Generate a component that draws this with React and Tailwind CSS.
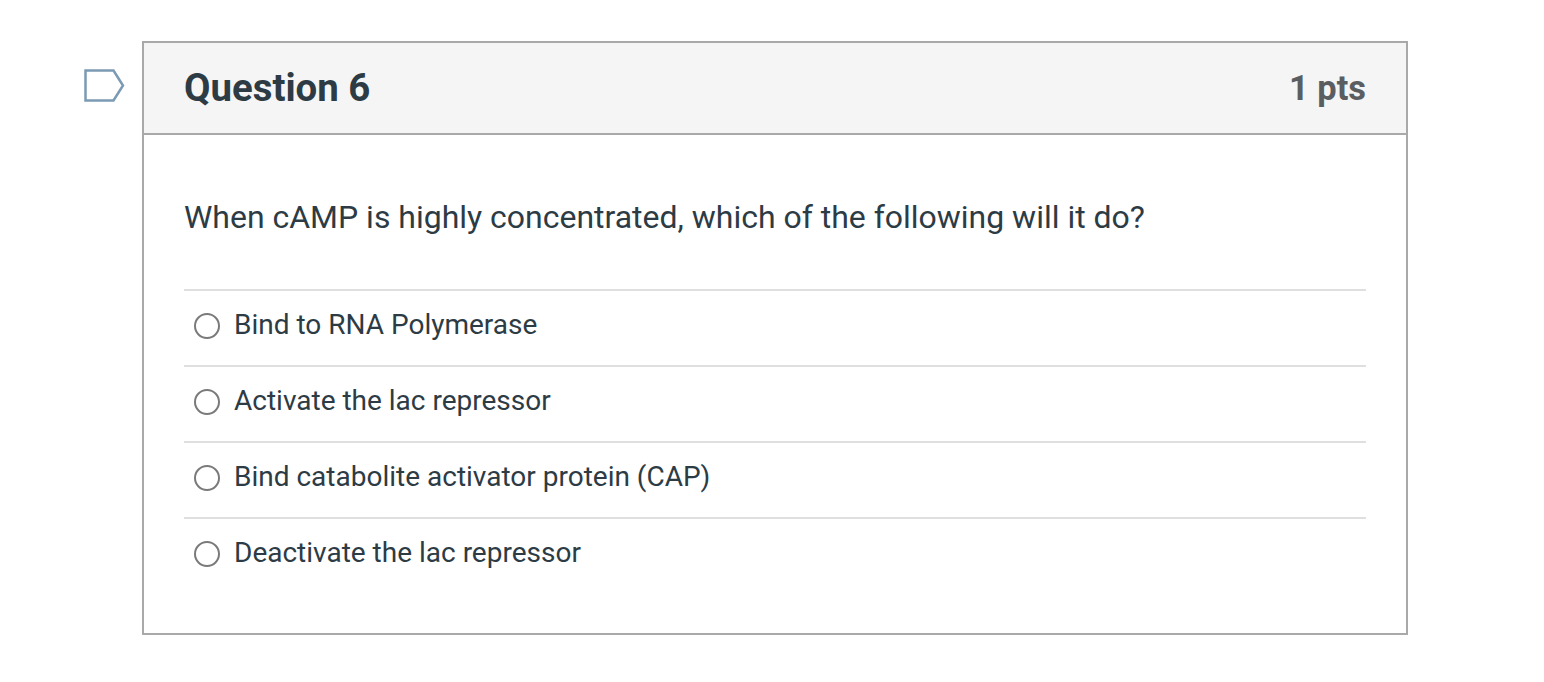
export default function App() {
  const answers = [
    "Bind to RNA Polymerase",
    "Activate the lac repressor",
    "Bind catabolite activator protein (CAP)",
    "Deactivate the lac repressor",
  ];
  return (
    <div className="min-h-[682px] bg-white pt-[41px] pl-[84px] flex items-start font-['Roboto',sans-serif] text-[#2d3b45]">
      <div className="w-[58px] shrink-0 pt-[28px]">
        <svg width="41" height="34" viewBox="0 0 41 34" fill="none" className="block">
          <path d="M1.5 1.5H29.5L39 16.5L29.5 31.5H1.5Z" fill="white" stroke="#7c9ab3" strokeWidth="2.5" />
        </svg>
      </div>
      <div className="w-[1266px] h-[594px] border-2 border-[#a9a9a9] flex flex-col">
        <div className="h-[92px] bg-[#f5f5f5] border-b-2 border-[#a9a9a9] px-[40px] flex items-center justify-between shrink-0">
          <h2 className="text-[38.4px] font-bold leading-none">Question 6</h2>
          <span className="text-[34.4px] font-bold leading-none text-[#5b5e61]">1 pts</span>
        </div>
        <div className="px-[40px] flex-1">
          <p className="text-[31.97px] leading-[44px] pt-[60px] pb-[50px]">When cAMP is highly concentrated, which of the following will it do?</p>
          <ul>
            {answers.map((a) => (
              <li key={a} className="h-[76px] border-t-2 border-[#dfdfdf] flex items-center pl-[10px] pb-[6px]">
                <span className="w-[26px] h-[26px] mt-[2px] rounded-full border-2 border-[#7a7a7a] bg-white shrink-0" />
                <span className="ml-[14px] text-[28px] leading-none">{a}</span>
              </li>
            ))}
          </ul>
        </div>
      </div>
    </div>
  );
}
